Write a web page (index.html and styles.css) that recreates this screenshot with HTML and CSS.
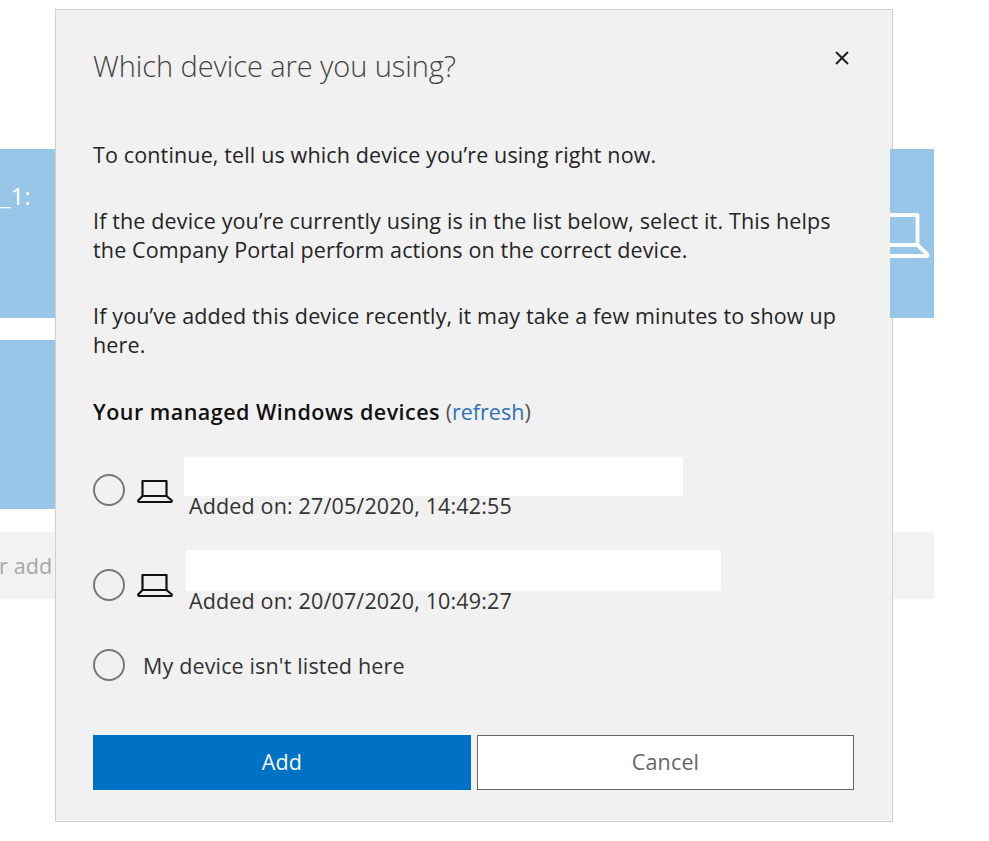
FILE: index.html
```html
<!DOCTYPE html>
<html lang="en">
<head>
<meta charset="utf-8">
<title>Which device are you using?</title>
<link rel="stylesheet" href="styles.css">
</head>
<body>
<main class="page">
  <div class="tile tile-wide">
    <span class="tile-name">_1:</span>
  </div>
  <div class="tile tile-narrow"></div>
  <div class="search-bar"><span class="search-text">r add</span></div>
</main>

<section class="dialog" role="dialog" aria-labelledby="dlg-title">
  <header class="dialog-head">
    <h1 id="dlg-title" class="dialog-title">Which device are you using?</h1>
    <svg class="close" viewBox="0 0 14 14" width="14" height="14" fill="none" stroke="#222" stroke-width="2"><path d="M1 1L13 13M13 1L1 13"/></svg>
  </header>
  <p class="para first">To continue, tell us which device you’re using right now.</p>
  <p class="para">If the device you’re currently using is in the list below, select it. This helps the Company Portal perform actions on the correct device.</p>
  <p class="para last">If you’ve added this device recently, it may take a few minutes to show up here.</p>
  <p class="list-title"><strong>Your managed Windows devices</strong> <span class="refresh-wrap">(<a class="refresh" href="#">refresh</a>)</span></p>

  <div class="device device-one">
    <span class="radio"></span>
    <svg class="laptop" viewBox="0 0 36 24" width="36" height="24" fill="none" stroke="#111" stroke-width="2.200" stroke-linejoin="round"><path d="M5.500 2H29.500V17H5.500Z"/><path d="M5.500 17L1.200 21.500Q1 23 2.500 23H33.500Q35 23 34.800 21.500L29.500 17"/></svg>
    <div class="device-info">
      <div class="redact redact-one"></div>
      <div class="added added-one">Added on: 27/05/2020, 14:42:55</div>
    </div>
  </div>

  <div class="device device-two">
    <span class="radio"></span>
    <svg class="laptop" viewBox="0 0 36 24" width="36" height="24" fill="none" stroke="#111" stroke-width="2.200" stroke-linejoin="round"><path d="M5.500 2H29.500V17H5.500Z"/><path d="M5.500 17L1.200 21.500Q1 23 2.500 23H33.500Q35 23 34.800 21.500L29.500 17"/></svg>
    <div class="device-info">
      <div class="redact redact-two"></div>
      <div class="added added-two">Added on: 20/07/2020, 10:49:27</div>
    </div>
  </div>

  <div class="device-none">
    <span class="radio"></span>
    <span class="none-label">My device isn't listed here</span>
  </div>

  <div class="actions">
    <button class="btn btn-primary" type="button">Add</button>
    <button class="btn btn-secondary" type="button">Cancel</button>
  </div>
</section>

<div class="tile-edge">
  <svg class="tile-icon" viewBox="0 0 44 50" width="44" height="50" fill="none" stroke="#fff" stroke-width="3.800" stroke-linejoin="round"><path d="M-5 4H27.500V34H-5"/><path d="M27.500 34L37 43Q38.500 45 36 45H-5"/></svg>
</div>
</body>
</html>
```

FILE: styles.css
```css
* { box-sizing: border-box; }
html, body { margin: 0; padding: 0; }
body {
  background: #fff;
  font-family: "Open Sans", "Noto Sans", "Liberation Sans", sans-serif;
  color: #252525;
  width: 989px;
  height: 841px;
  overflow: hidden;
  position: relative;
}
.page { padding-top: 149px; width: 934px; }
.tile { background: #98c6e8; color: #fff; }
.tile-wide { height: 169px; padding-top: 31px; }
.tile-name { font-size: 24px; line-height: 32px; }
.tile-narrow { height: 169px; width: 300px; margin-top: 22px; }
.search-bar {
  height: 67px;
  margin-top: 23px;
  background: #f2f2f2;
  font-size: 21.500px;
  line-height: 67px;
  letter-spacing: 0.150px;
  color: #a6a6a6;
  text-indent: -1px;
}

.tile-edge {
  position: absolute;
  left: 890px;
  top: 149px;
  width: 44px;
  height: 169px;
  background: #98c6e8;
  padding-top: 62px;
  overflow: hidden;
}
.tile-icon { display: block; overflow: hidden; }

.dialog {
  position: absolute;
  left: 55px;
  top: 9px;
  width: 838px;
  height: 813px;
  background: #f1f1f1;
  border: 1px solid #cfcfcf;
  padding: 0 38px 0 37px;
}
.dialog-head { display: flex; justify-content: space-between; height: 113px; }
.dialog-title {
  margin: 35px 0 0;
  font-size: 29px;
  line-height: 42px;
  font-weight: 300;
  color: #444;
  letter-spacing: -0.080px;
}
.close { margin: 41px 5px 0 0; }
.para {
  margin: 0 0 37px;
  font-size: 21.500px;
  line-height: 29px;
  color: #252525;
  letter-spacing: 0.140px;
}
.para.first { margin: 17px 0 37px; }
.para.last { margin-bottom: 38px; }
.list-title { margin: 0; font-size: 21.500px; line-height: 29px; color: #111; }
.list-title strong { font-weight: 600; letter-spacing: 0.480px; }
.refresh-wrap { color: #555; letter-spacing: 0; }
.refresh { color: #2f72b5; text-decoration: none; }

.device { display: flex; align-items: flex-start; }
.device-one { margin-top: 31px; height: 93px; }
.device-two { height: 79px; }
.radio {
  flex: none;
  display: block;
  width: 32px;
  height: 32px;
  border: 2px solid #777;
  border-radius: 50%;
}
.device .radio { margin-top: 17px; }
.device-two .radio { margin-top: 19px; }
.laptop { flex: none; margin: 22px 0 0 12px; }
.device-two .laptop { margin-top: 23px; }
.device-info { margin-left: 11px; }
.redact { background: #fff; }
.redact-one { width: 499px; height: 39px; }
.redact-two { width: 535px; height: 41px; margin-left: 2px; }
.added { font-size: 21.500px; line-height: 28px; letter-spacing: 0.150px; color: #333; padding-left: 5px; margin-top: -4px; }

.device-none { display: flex; align-items: center; height: 32px; margin-top: 20px; }
.none-label { margin-left: 18px; font-size: 21.500px; line-height: 32px; letter-spacing: 0.150px; color: #333; margin-top: 1px; }

.actions { display: flex; gap: 6px; margin-top: 54px; }
.btn {
  width: 378px;
  height: 55px;
  font-family: inherit;
  font-size: 21.500px;
  padding: 0 0 2px;
  letter-spacing: 0.150px;
}
.btn-primary { background: #0072c6; color: #f4f8fb; border: 0; }
.btn-secondary { width: 377px; background: #fff; color: #666; border: 1px solid #666; }
```
